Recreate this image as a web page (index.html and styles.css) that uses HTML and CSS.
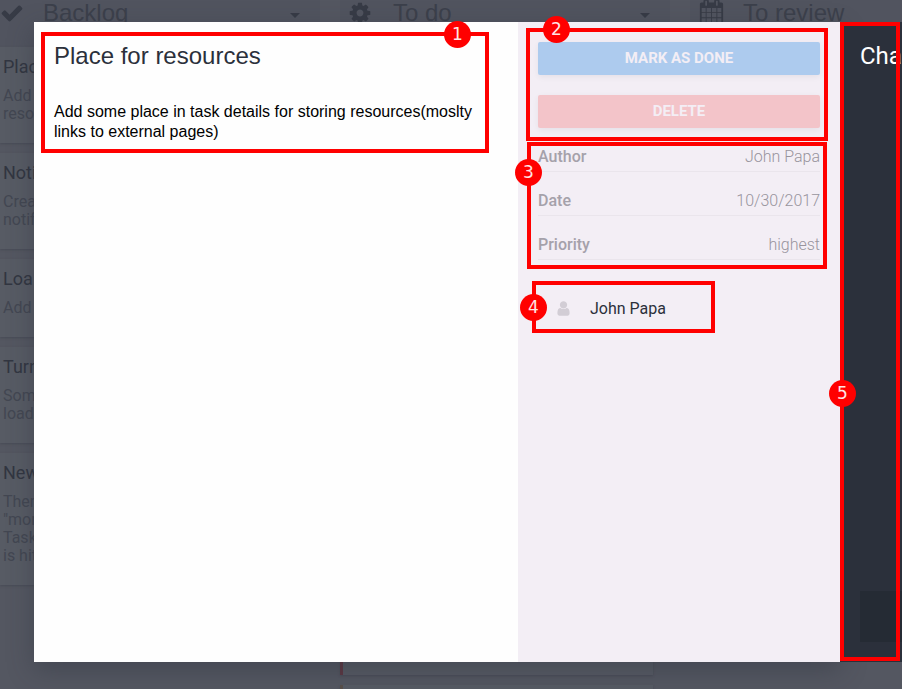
FILE: index.html
```html
<!DOCTYPE html>
<html lang="en">
<head>
<meta charset="utf-8">
<title>Task details</title>
<link rel="stylesheet" href="styles.css">
</head>
<body>
<div class="stage">
  <main class="board">
    <section class="column">
      <header class="column-head">
        <svg class="head-icon" viewBox="0 0 1792 1792"><path d="M1671 566q0 40-28 68l-724 724-136 136q-28 28-68 28t-68-28l-136-136-362-362q-28-28-28-68t28-68l136-136q28-28 68-28t68 28l294 295 656-657q28-28 68-28t68 28l136 136q28 28 28 68z"/></svg>
        <h2>Backlog</h2><i class="caret"></i>
      </header>
      <div class="cards">
        <article class="card"><h3>Plac</h3><p>Add<br>reso</p></article>
        <article class="card"><h3>Noti</h3><p>Crea<br>notif</p></article>
        <article class="card"><h3>Loa</h3><p>Add</p></article>
        <article class="card"><h3>Turn</h3><p>Som<br>load</p></article>
        <article class="card"><h3>New</h3><p>Then<br>"mor<br>Task<br>is hit</p></article>
      </div>
    </section>
    <section class="column todo">
      <header class="column-head">
        <svg class="head-icon" viewBox="0 0 1792 1792"><path d="M1152 896q0-106-75-181t-181-75-181 75-75 181 75 181 181 75 181-75 75-181zm512-109v222q0 12-8 23t-20 13l-185 28q-19 54-39 91 35 50 107 138 10 12 10 25t-9 23q-27 37-99 108t-94 71q-12 0-26-9l-138-108q-44 23-91 38-16 136-29 186-7 28-36 28h-222q-14 0-24.5-8.5t-11.5-21.5l-28-184q-49-16-90-37l-141 107q-10 9-25 9-14 0-25-11-126-114-165-168-7-10-7-23 0-12 8-23 15-21 51-66.5t54-70.5q-27-50-41-99l-183-27q-13-2-21-12.5t-8-23.5v-222q0-12 8-23t19-13l186-28q14-46 39-92-40-57-107-138-10-12-10-24 0-10 9-23 26-36 98.5-107.5t94.5-71.5q13 0 26 10l138 107q44-23 91-38 16-136 29-186 7-28 36-28h222q14 0 24.5 8.5t11.5 21.5l28 184q49 16 90 37l142-107q9-9 24-9 13 0 25 10 129 119 165 170 7 8 7 22 0 12-8 23-15 21-51 66.5t-54 70.5q26 50 41 98l183 28q13 2 21 12.5t8 23.5z"/></svg>
        <h2>To do</h2><i class="caret"></i>
      </header>
      <div class="cards">
        <article class="card tall high"></article>
        <article class="card medium"></article>
      </div>
    </section>
    <section class="column review">
      <header class="column-head">
        <svg class="head-icon" viewBox="0 0 1792 1792"><path d="M192 1664h288v-288h-288v288zm352 0h320v-288h-320v288zm-352-352h288v-320h-288v320zm352 0h320v-320h-320v320zm-352-384h288v-288h-288v288zm736 736h320v-288h-320v288zm-384-736h320v-288h-320v288zm768 736h288v-288h-288v288zm-384-352h320v-320h-320v320zm-352-864v-288q0-13-9.500-22.500t-22.500-9.500h-64q-13 0-22.500 9.500t-9.500 22.500v288q0 13 9.500 22.500t22.500 9.500h64q13 0 22.500-9.500t9.500-22.500zm736 864h288v-320h-288v320zm-384-384h320v-288h-320v288zm384 0h288v-288h-288v288zm32-480v-288q0-13-9.500-22.500t-22.500-9.500h-64q-13 0-22.500 9.500t-9.500 22.500v288q0 13 9.500 22.500t22.500 9.500h64q13 0 22.500-9.500t9.500-22.500zm384-64v1280q0 52-38 90t-90 38h-1408q-52 0-90-38t-38-90v-1280q0-52 38-90t90-38h128v-96q0-66 47-113t113-47h64q66 0 113 47t47 113v96h384v-96q0-66 47-113t113-47h64q66 0 113 47t47 113v96h128q52 0 90 38t38 90z"/></svg>
        <h2>To review</h2>
      </header>
    </section>
  </main>

  <div class="dialog">
    <section class="details">
      <h1>Place for resources</h1>
      <p>Add some place in task details for storing resources(moslty links to external pages)</p>
    </section>
    <aside class="side">
      <button class="btn done">MARK AS DONE</button>
      <button class="btn delete">DELETE</button>
      <dl class="facts">
        <div><dt>Author</dt><dd>John Papa</dd></div>
        <div><dt>Date</dt><dd>10/30/2017</dd></div>
        <div><dt>Priority</dt><dd>highest</dd></div>
      </dl>
      <div class="person">
        <svg viewBox="0 0 1792 1792"><path d="M1536 1399q0 109-62.500 187t-150.500 78h-854q-88 0-150.500-78t-62.500-187q0-85 8.500-160.500t31.500-152 58.500-131 94-89 134.500-34.500q131 128 313 128t313-128q76 0 134.500 34.500t94 89 58.500 131 31.500 152 8.500 160.500zm-256-887q0 159-112.500 271.500t-271.500 112.500-271.500-112.500-112.500-271.500 112.500-271.500 271.500-112.500 271.500 112.500 112.500 271.500z"/></svg>
        <span>John Papa</span>
      </div>
    </aside>
  </div>
  <section class="chat"><h2>Cha</h2><div class="chat-input"></div></section>

  <div class="mark m1"><b>1</b></div>
  <div class="mark m2"><b>2</b></div>
  <div class="mark m3"><b>3</b></div>
  <div class="mark m4"><b>4</b></div>
  <div class="mark m5"><b>5</b></div>
</div>
</body>
</html>
```
FILE: styles.css
```css
* { box-sizing: border-box; margin: 0; padding: 0; }
body { font-family: Roboto, sans-serif; background: #525560; }
h1, h2, h3 { font-weight: 400; }
.stage { position: relative; width: 902px; height: 689px; overflow: hidden; }

.board { display: flex; gap: 20px; height: 689px; background: #545761; }
.column { width: 320px; flex: none; }
.todo, .review { width: 330px; }
.column-head { display: flex; align-items: center; height: 47px; padding: 0 20px 21px 0; background: #51545f; }
.column-head h2 { flex: 1; margin-left: 19px; font: 24px/26px "Liberation Sans", sans-serif; color: #3c404b; }
.head-icon { width: 24px; height: 24px; fill: #373b46; }
.todo .column-head, .review .column-head { padding-left: 8px; }
.todo .head-icon { margin-right: 3px; }
.todo h2 { margin-left: 18px; }
.review .head-icon { margin: -4px 0 0 1px; width: 25px; height: 25px; }
.caret { border: 5px solid transparent; border-top-color: #373b46; border-bottom: 0; margin-top: 4px; }
.cards { display: flex; flex-direction: column; gap: 10px; }
.card { padding: 10px 3px 20px; background: #575b64; box-shadow: 0 1px 2px rgba(60, 63, 73, .5); }
.card h3 { font-size: 18px; line-height: 20px; color: #323641; }
.card p { margin-top: 10px; font-size: 16px; line-height: 18px; color: #434752; }
.todo .card { width: 313px; height: 96px; border-left: 3px solid #584f4a; }
.todo .tall { height: 628px; }
.todo .high { border-left-color: #5d3742; }

.dialog { position: absolute; left: 34px; top: 22px; width: 806px; height: 640px; display: flex; background: #fefefe; box-shadow: 0 8px 24px rgba(43, 48, 59, .4); }
.details { width: 484px; padding: 20px; }
.details h1 { font: 24px/28px "Liberation Sans", sans-serif; color: #2b303b; }
.details p { margin-top: 32px; font: 16px/20px "Liberation Sans", sans-serif; color: #000; }
.side { width: 322px; padding: 20px; background: #f3eef5; }
.btn { display: block; width: 282px; height: 33px; margin-bottom: 20px; border: 0; border-radius: 2px; font: 700 15px/33px Roboto, sans-serif; color: #f3eef5; box-shadow: 0 2px 6px rgba(0, 0, 0, .06); }
.done { background: #adcbee; }
.delete { background: #f3c4c9; }
.facts { margin-top: -20px; }
.facts div { display: flex; justify-content: space-between; height: 44px; padding-top: 19px; border-bottom: 1px solid #eae5ec; font-size: 16px; line-height: 20px; color: #a5a1aa; }
.facts dt { font-weight: 500; }
.facts dd { font-weight: 300; color: #98949d; }
.person { display: flex; align-items: center; gap: 18px; margin-top: 38px; padding-left: 17px; font-size: 16px; line-height: 20px; color: #2b303b; }
.person svg { width: 17px; height: 17px; fill: #d2cdd5; }
.person span { padding-top: 1px; }

.chat { position: absolute; left: 840px; top: 22px; width: 62px; height: 640px; display: flex; flex-direction: column; justify-content: space-between; padding: 19px 0 20px 20px; overflow: hidden; background: #2b303b; }
.chat h2 { font-size: 24px; line-height: 30px; color: #fff; }
.chat-input { height: 51px; background: #252b34; }

.mark { position: absolute; border: 4px solid #f00; }
.mark b { position: absolute; width: 27px; height: 27px; border-radius: 50%; background: #f00; color: #ffe4e4; font: 17px/26px "DejaVu Sans", sans-serif; text-align: center; }
.m1 { left: 41px; top: 32px; width: 448px; height: 121px; }
.m1 b { left: 399px; top: -15px; }
.m2 { left: 526px; top: 28px; width: 302px; height: 113px; }
.m2 b { left: 13px; top: -16px; }
.m3 { left: 527px; top: 142px; width: 300px; height: 127px; }
.m3 b { left: -16px; top: 13px; }
.m4 { left: 532px; top: 281px; width: 183px; height: 52px; }
.m4 b { left: -16px; top: 9px; }
.m5 { left: 840px; top: 22px; width: 60px; height: 639px; }
.m5 b { left: -15px; top: 354px; }
```
